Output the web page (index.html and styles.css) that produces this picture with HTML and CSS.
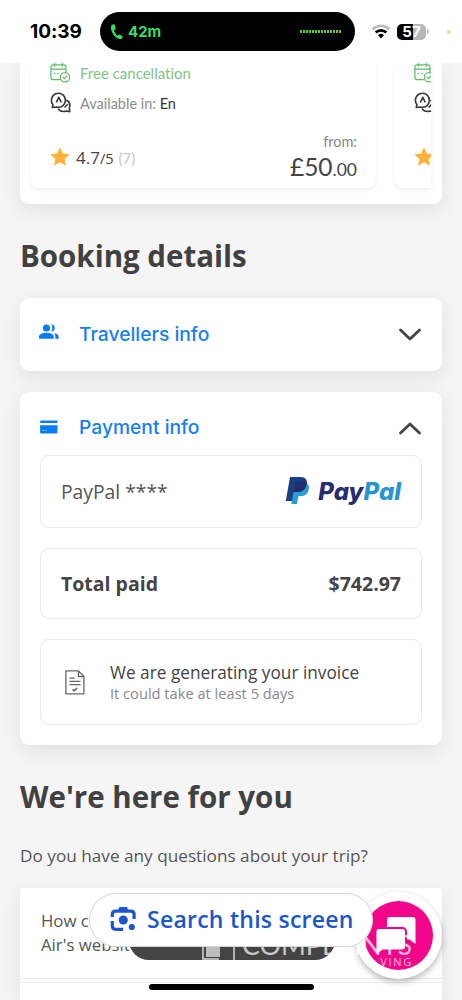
FILE: index.html
```html
<!DOCTYPE html>
<html lang="en">
<head>
<meta charset="utf-8">
<meta name="viewport" content="width=device-width, initial-scale=1">
<title>Booking details</title>
<link rel="stylesheet" href="styles.css">
</head>
<body>
<svg class="defs" width="0" height="0">
  <symbol id="calendar" viewBox="0 0 20 20"><g fill="none" stroke="#62b96a" stroke-width="1.25" stroke-linecap="round"><path d="M10 16.6H3.2a2.3 2.3 0 0 1-2.3-2.3V4.1a2.3 2.3 0 0 1 2.3-2.3h10.5A2.3 2.3 0 0 1 16 4.100V9M1 6.200h15M4.600.6v2.600M12.400.6v2.600"/><circle cx="15" cy="14.200" r="4.700"/><path d="m13 14.300 1.500 1.300 2.500-2.700"/><path d="M4.500 10.600h.1M8 10.600h.1" stroke-width="1.500"/></g></symbol>
  <symbol id="language" viewBox="0 0 22 22"><g fill="none" stroke="#383838" stroke-width="1.600" stroke-linecap="round" stroke-linejoin="round"><path d="M2.200 15.500 3 12.700A7 7 0 1 1 6.500 15l-4.300.5zM6.600 9.800l2.200-4.500L11 9.800M17 8.500c3 1.800 3.500 4.500 2.300 7.300l.5 3.900-3.300-.7c-3.500 1-6.500.2-8-1.800M17.500 12.500l-2.500 2.500"/></g></symbol>
  <symbol id="star" viewBox="0 0 20 20"><path fill="#fdb137" d="m10 .3 2.800 6.200 6.900.8-5.100 4.600 1.400 6.900-6-3.500-6 3.500 1.400-6.900L.3 7.300l6.900-.8z"/></symbol>
</svg>

<header class="status">
  <span class="clock">10:39</span>
  <div class="island">
    <svg width="14" height="17" viewBox="0 0 14 17"><path fill="#39db68" d="M3.300 1.200 1.500 2C-.5 6 3.500 14.500 9.300 16c1.400.3 2.600-.2 3.200-1.300.4-.8.200-1.300-.4-1.700l-2-1.300c-.7-.4-1.200-.2-1.700.3l-.7.7c-1.800-1-3.200-3.400-3.700-5.400l1-.6c.6-.4.7-.9.5-1.600l-.7-3c-.2-.8-.7-1.100-1.500-.9z"/></svg>
    <span class="call">42m</span>
    <span class="wave"></span>
  </div>
  <svg class="wifi" width="18" height="15" viewBox="0 0 18 15"><g fill="none" stroke-width="2.700"><path stroke="#bbb" d="M.8 5.200a11.500 11.500 0 0 1 16.400 0"/><path stroke="#000" d="M3.700 8.500a7.500 7.500 0 0 1 10.600 0"/></g><path d="M6 11.300a4.300 4.300 0 0 1 6 0l-3 3.200z"/></svg>
  <div class="battery"><span>57</span></div>
  <i class="cap"></i>
  <i class="mic-dot"></i>
</header>

<main class="page">
  <section class="card carousel">
    <article class="offer">
      <div class="line free"><svg class="ico" width="20" height="20"><use href="#calendar"/></svg><span class="free-text">Free cancellation</span></div>
      <div class="line lang"><svg class="ico" width="22" height="22"><use href="#language"/></svg><span class="lang-text">Available in: <b>En</b></span></div>
      <div class="foot">
        <svg width="20" height="20"><use href="#star"/></svg>
        <span class="rating">4.7<small>/5</small></span><span class="count">(7)</span>
        <div class="price"><span class="from">from:</span><span class="sum">£50<small>.00</small></span></div>
      </div>
    </article>
    <article class="offer next">
      <div class="line free"><svg class="ico" width="20" height="20"><use href="#calendar"/></svg></div>
      <div class="line lang"><svg class="ico" width="22" height="22"><use href="#language"/></svg></div>
      <div class="foot"><svg width="20" height="20"><use href="#star"/></svg></div>
    </article>
  </section>

  <h2 class="title booking">Booking details</h2>

  <section class="card accordion">
    <svg class="people" width="20" height="16" viewBox="0 0 20 16"><g fill="#087cf5"><circle cx="7.500" cy="4" r="3.600"/><path d="M0 14.700v-2.200c0-2.500 4-3.800 7.500-3.800s7.300 1.300 7.300 3.800v2.200zM12 .5c5-.8 5 7.400.2 7 1.600-2 1.600-5-.2-7zM15.200 9.100c2.300.4 4.500 1.600 4.500 3.400v2.200h-3.300v-2.300c0-1.300-.4-2.300-1.200-3.300z"/></g></svg>
    <span class="link travellers">Travellers info</span>
    <svg class="arrow" width="24" height="16" viewBox="0 0 24 16"><path class="chev" d="m2.500 3 9.500 9 9.500-9"/></svg>
  </section>

  <section class="card payment">
    <div class="accordion-head">
      <svg width="20" height="14" viewBox="0 0 20 14"><path fill="#087cf5" d="M2.300.5h15a1.200 1.200 0 0 1 1.200 1.200v1.400H1.100V1.700A1.200 1.200 0 0 1 2.300.5zM1.100 5.200h17.400v7a1.200 1.200 0 0 1-1.200 1.200h-15a1.200 1.200 0 0 1-1.200-1.200z"/><path stroke="#6fb3f9" d="M3 10.500h2.500M6.500 10.500h1.500"/></svg>
      <span class="link pay">Payment info</span>
      <svg class="arrow" width="24" height="16" viewBox="0 0 24 16"><path class="chev" d="m2.500 13 9.500-9 9.500 9"/></svg>
    </div>
    <div class="box method">
      <span class="method-name">PayPal ****</span>
      <div class="paypal">
        <svg width="25" height="29" viewBox="0 0 25 29"><path fill="#1b3f83" d="M5 1h10.500c5 0 7.300 3 6.300 7.600-1 5.200-4.200 7.600-9.300 7.600H9.300L7.700 25H.8z"/><path fill="#2a9bd6" d="M21.800 7.200c2 1.400 2.600 3.500 2 6.200-1 4.600-3.800 6.600-8.300 6.600h-2.100L12 28H6.300l2.300-12h4.500c5 0 7.700-3 8.700-8.800z"/><path fill="#222e66" d="M21.800 7.200c-.8 5.500-3.700 8.900-9.300 8.900H8.600l1.600-9.300c.2-1 .8-1.400 1.800-1.400h6c1.700 0 2.900.6 3.800 1.800z"/></svg>
        <span class="wordmark">Pay<em>Pal</em></span>
      </div>
    </div>
    <div class="box total"><span class="total-label">Total paid</span><span class="total-sum">$742.97</span></div>
    <div class="box invoice">
      <svg width="20" height="25" viewBox="0 0 20 25"><g fill="none" stroke="#666" stroke-width="1.300" stroke-linejoin="round"><path d="M.9.900h12.600l5.400 5.600v17.300H.9zM13.500.9v5.600h5.400M4.500 8.200h5M4.500 11.300h11M4.500 14.600h11"/><path stroke-width="1.500" d="m7.500 19.300 1.700 1.600 3-3"/></g></svg>
      <div class="invoice-text"><span class="generating">We are generating your invoice</span><span class="take">It could take at least 5 days</span></div>
    </div>
  </section>

  <h2 class="title here">We're here for you</h2>
  <p class="question">Do you have any questions about your trip?</p>
  <section class="card faq">
    <div class="faq-item">How c<br>Air's website</div>
    <div class="faq-item second"></div>
  </section>
</main>

<div class="dark-pill"></div>
<div class="chat"><div class="chat-inner">
  <svg width="69" height="69" viewBox="0 0 69 69"><g fill="#fff"><path d="M26 16h22.500a3 3 0 0 1 3 3v24l-6-4.500H26a3 3 0 0 1-3-3V19a3 3 0 0 1 3-3z"/><path stroke="#f2058a" stroke-width="2" d="M14 27h24.500a3.500 3.500 0 0 1 3.500 3.500V46a3.500 3.500 0 0 1-3.500 3.500H19L11.500 55V30A3 3 0 0 1 14 27z"/></g></svg>
</div></div>
<div class="watermark">
  <svg width="32" height="30" viewBox="0 0 32 30"><path fill="#fff" fill-opacity=".65" d="M10 10h14v12H10z"/><path fill="none" stroke="#fff" stroke-opacity=".8" stroke-width="1.500" d="M7 8v16h16M38 5v20"/></svg>
  <div class="mark-text"><span class="mark-main">COMPLAINTS</span><span class="mark-sub">VING</span></div>
</div>
<button class="search">
  <svg width="27" height="26" viewBox="0 0 27 26"><g fill="none" stroke="#1a56cf" stroke-width="3.200"><path d="M2.300 11V8.400c0-2 1.300-3.300 3.300-3.300h15.200c2 0 3.300 1.300 3.300 3.300v4.500M2.300 15v5c0 2 1.300 3.300 3.300 3.300h7.600"/></g><path fill="#1a56cf" d="m8 4 1.500-3h7.400l1.500 3z"/><circle cx="13.300" cy="14" r="4.600" fill="#1a56cf"/><circle cx="21.800" cy="21" r="3.100" fill="#1a56cf"/></svg>
  <span class="search-text">Search this screen</span>
</button>
<div class="home-bar"></div>
</body>
</html>
```

FILE: styles.css
```css
* { box-sizing: border-box; }
body { margin: 0; width: 462px; height: 1000px; overflow: hidden; position: relative; background: #f5f5f5; font-family: "Open Sans", sans-serif; color: #444; font-variant-ligatures: none; }
svg { display: block; flex: none; }
span { white-space: nowrap; }
.defs { position: absolute; }

.status { height: 63px; background: #fff; display: flex; align-items: center; font-family: Inter, sans-serif; position: relative; z-index: 1; }
.clock { width: 70px; margin-left: 30px; font-size: 19px; font-weight: 700; color: #000; }
.island { width: 255px; height: 39px; border-radius: 20px; background: #000; display: flex; align-items: center; padding-left: 10px; }
.call { color: #39db68; font-size: 15px; font-weight: 700; margin-left: 4px; flex: 1; }
.wave { width: 43px; height: 3px; margin-right: 13px; background: repeating-linear-gradient(90deg, #000 0 1px, transparent 1px 3px), linear-gradient(90deg, #44da21, #8cba2c); }
.wifi { margin-left: 17px; }
.battery { margin-left: 7px; width: 29px; height: 16px; border-radius: 5px; background: linear-gradient(90deg, #000 55%, #b8b8b8 55%); color: #fff; font-size: 15px; line-height: 16px; font-weight: 700; text-align: center; }
.cap { width: 2px; height: 5px; margin-left: 1px; border-radius: 0 2px 2px 0; background: #c3c3c3; }
.mic-dot { width: 4px; height: 4px; border-radius: 50%; background: #ffd39a; margin-left: 18px; }

.page { padding: 0 20px; }
.card { background: #fff; border-radius: 9px; box-shadow: 0 6px 20px rgba(0,0,0,.085); }
.carousel { height: 141px; border-radius: 0 0 9px 9px; padding: 0 11px 16px 10px; display: flex; }
.offer { width: 346px; height: 125px; flex: none; border-radius: 0 0 9px 9px; padding-left: 20px; box-shadow: 0 3px 4px -1px rgba(0,0,0,.07), 2px 0 5px rgba(0,0,0,.02); font-family: Lato, sans-serif; background: #fff; }
.offer.next { width: 37px; margin-left: 18px; overflow: hidden; border-radius: 0 0 0 9px; padding-left: 20px; }
.line { display: flex; align-items: center; height: 20px; }
.lang { margin-top: 9px; height: 22px; }
.free-text { margin-left: 10px; font-size: 15px; color: #7fc486; }
.lang-text { margin-left: 8px; font-size: 14.500px; color: #8b8b8b; }
.lang-text b { font-weight: 400; color: #333; }
.foot { display: flex; align-items: flex-start; margin-top: 33px; }
.rating { font: 17px/22px "Open Sans", sans-serif; margin-left: 6px; }
.rating small { font-size: 14.500px; }
.count { font: 15px/22px Lato, sans-serif; color: #c3c8c8; margin-left: 5px; }
.price { margin-left: auto; margin-right: 19px; margin-top: -14px; display: flex; flex-direction: column; align-items: flex-end; }
.from { font-size: 14.500px; line-height: 18px; color: #888; }
.sum { font-size: 24.500px; line-height: 32px; }
.sum small { font-size: 17.500px; }

.title { margin: 0; font-size: 29.500px; line-height: 40px; font-weight: 700; white-space: nowrap; color: #414141; }
.booking { margin-top: 32px; }
.accordion { display: flex; align-items: center; height: 73px; margin-top: 22px; padding: 0 20px 2px 19px; }
.people { margin-top: -3px; }
.link { font: 500 19.250px/26px Inter, sans-serif; color: #1680f0; margin-left: 20px; flex: 1; }
.arrow { margin-top: 3px; }
.chev { fill: none; stroke: #444; stroke-width: 2.800; stroke-linecap: round; stroke-linejoin: round; }
.payment { margin-top: 21px; height: 353px; padding: 0 20px; }
.accordion-head { display: flex; align-items: center; height: 63px; padding-top: 6px; margin-left: -1px; }
.box { border: 1px solid #eaeaea; border-radius: 9px; display: flex; align-items: center; justify-content: space-between; padding: 0 20px; }
.method { height: 73px; }
.method-name { font-size: 19.300px; color: #555; }
.paypal { display: flex; align-items: center; gap: 8px; margin-top: -3px; }
.wordmark { font: italic 800 24px/26px Inter, sans-serif; color: #282c70; margin-top: 4px; }
.wordmark em { color: #2596d4; }
.total { height: 71px; margin-top: 20px; font-size: 19.500px; font-weight: 700; }
.invoice { height: 86px; margin-top: 20px; justify-content: flex-start; padding-left: 24px; }
.invoice-text { display: flex; flex-direction: column; margin-left: 25px; margin-top: -1px; }
.generating { font-size: 17.250px; line-height: 23px; }
.take { font-size: 14.650px; line-height: 19px; color: #888; }
.here { margin-top: 32px; }
.question { margin: 27px 0 0; font-size: 17.200px; line-height: 24px; color: #555; white-space: nowrap; }
.faq { margin-top: 20px; height: 112px; border-radius: 3px 3px 0 0; }
.faq-item { height: 91px; padding: 21px; font-size: 16.800px; line-height: 24px; color: #555; border-bottom: 1px solid #e8e8e8; white-space: nowrap; }
.second { height: 18px; margin-top: 3px; border-top: 1px solid #f1f1f1; border-bottom: 0; padding: 0; }

.dark-pill { position: absolute; left: 129px; top: 920px; width: 206px; height: 40px; border-radius: 20px; background: #444; }
.chat { position: absolute; left: 355px; top: 892px; width: 87px; height: 87px; border-radius: 50%; background: #fff; padding: 9px; box-shadow: 0 3px 6px rgba(0,0,0,.28); }
.chat-inner { width: 69px; height: 69px; border-radius: 50%; background: #f2058a; }
.watermark { position: absolute; left: 196px; top: 935px; display: flex; color: rgba(255,255,255,.72); }
.watermark svg { overflow: visible; }
.mark-text { display: flex; flex-direction: column; margin-left: 14px; width: 171px; }
.mark-main { font: 400 26.800px/20px Lato, sans-serif; }
.mark-sub { font: 400 11px/14px "Open Sans", sans-serif; letter-spacing: 1.700px; align-self: flex-end; }
.search { position: absolute; left: 89px; top: 893px; width: 284px; height: 54px; border: 1px solid #d5d5d8; border-radius: 27px; background: #fff; display: flex; align-items: center; padding: 0 0 2px 20px; }
.search-text { font: 600 23px/30px "Open Sans", sans-serif; letter-spacing: .25px; color: #1a56cf; margin-left: 10px; }
.home-bar { position: absolute; left: 149px; top: 984px; width: 165px; height: 6px; border-radius: 3px; background: #000; }
```
